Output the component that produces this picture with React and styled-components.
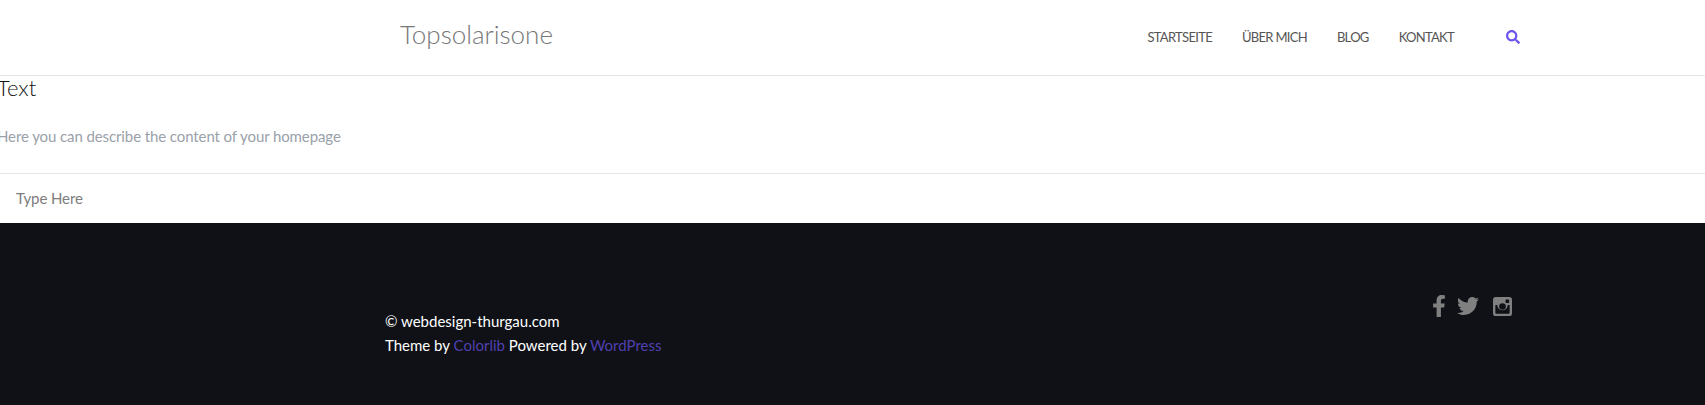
import React from "react";
import styled, { createGlobalStyle } from "styled-components";
import { FaFacebookF, FaTwitter, FaSearch } from "react-icons/fa";

const GlobalStyle = createGlobalStyle`
  html, body {
    margin: 0;
    padding: 0;
    background: #fff;
    overflow: hidden;
    font-family: "Lato", "Open Sans", sans-serif;
  }
`;

const Page = styled.div`
  width: 1705px;
  height: 405px;
  display: flex;
  flex-direction: column;
  overflow: hidden;
`;

const Header = styled.header`
  height: 76px;
  box-sizing: border-box;
  border-bottom: 1px solid #e5e5e5;
  display: flex;
  align-items: center;
  padding: 0 185px 0 400px;
`;

const Logo = styled.div`
  font-size: 26px;
  font-weight: 300;
  color: #777;
  flex: 1;
  margin-top: -8px;
`;

const Nav = styled.nav`
  display: flex;
  align-items: center;
  gap: 30px;
  margin-top: -2px;
`;

const NavLink = styled.a`
  font-size: 13px;
  color: #555;
  text-transform: uppercase;
  letter-spacing: -0.7px;
`;

const SearchButton = styled.span`
  display: flex;
  color: #6f55ee;
  font-size: 14px;
  margin-left: 22px;
`;

const Content = styled.section`
  height: 98px;
  box-sizing: border-box;
  border-bottom: 1px solid #e5e5e5;
  margin-left: -3px;
`;

const Title = styled.h2`
  margin: 0;
  font-size: 22px;
  line-height: 24px;
  font-weight: 300;
  color: #111;
`;

const Desc = styled.p`
  margin: 26px 0 0;
  font-size: 15px;
  line-height: 20px;
  font-weight: 400;
  letter-spacing: -0.1px;
  color: #9aa1a9;
`;

const TypeRow = styled.div`
  height: 49px;
  box-sizing: border-box;
  padding: 15px 16px 0;
  font-size: 15px;
  line-height: 18px;
  letter-spacing: -0.1px;
  color: #7d7d7d;
`;

const Footer = styled.footer`
  flex: 1;
  background: #0f1116;
  display: flex;
  justify-content: space-between;
  align-items: flex-start;
  padding: 72px 193px 0 385px;
`;

const Credits = styled.div`
  padding-top: 14px;
  font-size: 15px;
  line-height: 24px;
  color: #fff;
`;

const CreditLink = styled.a`
  color: #5040b0;
`;

const Socials = styled.div`
  display: flex;
  align-items: center;
  gap: 11px;
  color: #808080;
  font-size: 22px;
`;

const FacebookIcon = styled(FaFacebookF)`
  margin-right: -4px;
`;

const InstagramSvg = styled.svg`
  width: 19px;
  height: 19px;
  margin-left: 3px;
  fill: currentColor;
`;

const InstagramIcon = () => (
  <InstagramSvg viewBox="0 0 20 20">
    <path
      fillRule="evenodd"
      d="M3 0h14a3 3 0 0 1 3 3v14a3 3 0 0 1-3 3H3a3 3 0 0 1-3-3V3a3 3 0 0 1 3-3zM14 2.500a.8.8 0 0 0-.8.800v2.200a.8.800 0 0 0 .8.800h2.200a.8.800 0 0 0 .8-.800V3.300a.8.800 0 0 0-.8-.800zM2.500 8.500V16.500a1 1 0 0 0 1 1h13a1 1 0 0 0 1-1V8.500h-2A5.500 5.500 0 1 1 4.500 8.500zM10 6.500a3.500 3.500 0 1 0 0 7 3.500 3.500 0 0 0 0-7z"
    />
  </InstagramSvg>
);

export default function App() {
  return (
    <Page>
      <GlobalStyle />
      <Header>
        <Logo>Topsolarisone</Logo>
        <Nav>
          <NavLink>Startseite</NavLink>
          <NavLink>Über mich</NavLink>
          <NavLink>Blog</NavLink>
          <NavLink>Kontakt</NavLink>
          <SearchButton>
            <FaSearch />
          </SearchButton>
        </Nav>
      </Header>
      <Content>
        <Title>Text</Title>
        <Desc>Here you can describe the content of your homepage</Desc>
      </Content>
      <TypeRow>Type Here</TypeRow>
      <Footer>
        <Credits>
          <div>© webdesign-thurgau.com</div>
          <div>
            Theme by <CreditLink>Colorlib</CreditLink> Powered by <CreditLink>WordPress</CreditLink>
          </div>
        </Credits>
        <Socials>
          <FacebookIcon />
          <FaTwitter />
          <InstagramIcon />
        </Socials>
      </Footer>
    </Page>
  );
}
